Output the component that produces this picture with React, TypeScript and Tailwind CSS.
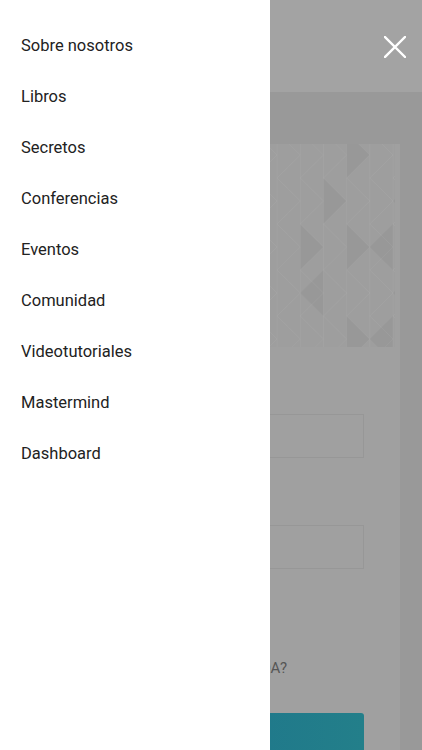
import React from 'react';

const items = [
  'Sobre nosotros',
  'Libros',
  'Secretos',
  'Conferencias',
  'Eventos',
  'Comunidad',
  'Videotutoriales',
  'Mastermind',
  'Dashboard',
];

// triangle mosaic behind the login card (dimmed by the drawer overlay)
function Pattern() {
  const w = 23.5;
  const h = 46;
  const cols = 17;
  const rows = 6;
  const shaded = [
    [14, 0], [13, 1], [15, 2], [12, 3], [16, 1], [14, 4], [13, 5], [15, 5], [12, 2], [16, 3], [14, 2], [15, 4],
  ];
  return (
    <svg width="100%" height="100%" preserveAspectRatio="none" viewBox="0 0 378 203">
      {shaded.map(([c, r], i) => {
        const x = c * w;
        const y = r * h - 12;
        const d = (c + r) % 2 === 0
          ? `M${x} ${y} L${x + w} ${y + h / 2} L${x} ${y + h} Z`
          : `M${x + w} ${y} L${x} ${y + h / 2} L${x + w} ${y + h} Z`;
        return <path key={i} d={d} fill="#000" fillOpacity={0.035} />;
      })}
      {Array.from({ length: cols + 1 }).map((_, c) => (
        <line key={'v' + c} x1={c * w} y1={0} x2={c * w} y2={203} stroke="#fff" strokeOpacity={0.05} />
      ))}
      {Array.from({ length: rows + 1 }).map((_, r) =>
        Array.from({ length: cols }).map((_, c) => {
          const y = r * h - 12;
          return (
            <g key={`d${r}-${c}`} stroke="#fff" strokeOpacity={0.05}>
              <line x1={c * w} y1={y} x2={(c + 1) * w} y2={y + h / 2} />
              <line x1={c * w} y1={y + h} x2={(c + 1) * w} y2={y + h / 2} />
            </g>
          );
        })
      )}
    </svg>
  );
}

export default function App() {
  return (
    <div className="relative w-[422px] h-[750px] overflow-hidden bg-[#999999] font-['Roboto',sans-serif]">
      {/* page behind the drawer */}
      <div className="h-[92px] bg-[#a3a3a3] flex items-center justify-end pr-[16px]">
        <svg width="22" height="22" viewBox="0 0 22 22" className="mt-[2px]">
          <path d="M1 1 L21 21 M21 1 L1 21" stroke="#fff" strokeWidth="2.4" strokeLinecap="square" />
        </svg>
      </div>
      <div className="mt-[52px] ml-[22px] w-[378px] h-[700px] bg-[#a0a0a0] flex flex-col">
        <div className="h-[203px] mr-[5px] bg-[#9e9e9e]">
          <Pattern />
        </div>
        <div className="mt-[67px] mr-[36px] ml-[24px] h-[44px] border border-[#979797]" />
        <div className="mt-[67px] mr-[36px] ml-[24px] h-[44px] border border-[#979797]" />
        <div className="mt-[89px] pr-[113px] text-right text-[15px] leading-5 text-[#555555]">
          ¿CONTRASEÑA OLVIDADA?
        </div>
        <div className="mt-[35px] mr-[36px] ml-[24px] h-[48px] rounded-[3px] bg-gradient-to-r from-[#1a6e8c] to-[#237f8a]" />
      </div>

      {/* drawer */}
      <nav className="absolute left-0 top-0 w-[270px] h-full bg-white pt-[21px]">
        {items.map((label) => (
          <div key={label} className="h-[51px] flex items-center px-[21px] text-[16.5px] text-[#222222]">
            {label}
          </div>
        ))}
      </nav>
    </div>
  );
}
